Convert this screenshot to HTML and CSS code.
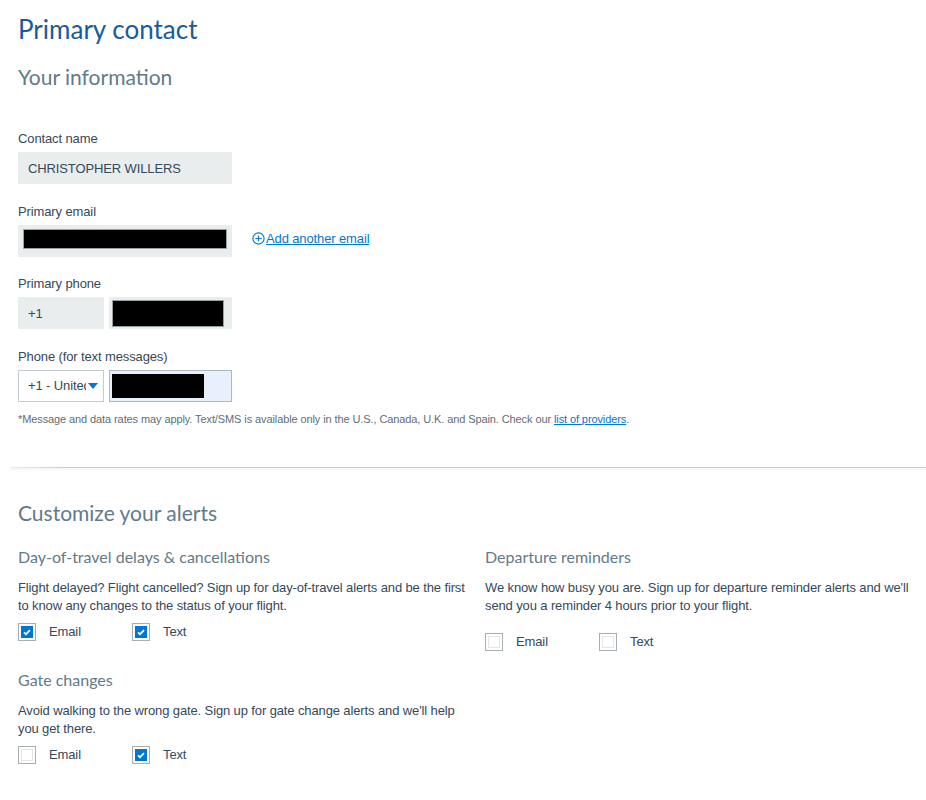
FILE: index.html
```html
<!DOCTYPE html>
<html lang="en">
<head>
<meta charset="utf-8">
<title>Primary contact</title>
<link rel="stylesheet" href="styles.css">
</head>
<body>
<main class="page">
  <h1 class="title">Primary contact</h1>
  <h2 class="section-title info-title">Your information</h2>

  <div class="fields">
    <div class="field">
      <div class="label">Contact name</div>
      <div class="input readonly wide">CHRISTOPHER WILLERS</div>
    </div>

    <div class="field">
      <div class="label">Primary email</div>
      <div class="row">
        <div class="input readonly wide email-box"><span class="redact redact-email"></span></div>
        <a class="add-link" href="#">
          <svg class="add-icon" width="13" height="13" viewBox="0 0 13 13" aria-hidden="true">
            <circle cx="6.5" cy="6.5" r="5.6" fill="none" stroke="#0078d2" stroke-width="1.1"/>
            <path d="M6.5 3.4v6.2M3.4 6.5h6.2" stroke="#0078d2" stroke-width="1.1" fill="none"/>
          </svg><span class="add-text">Add another email</span>
        </a>
      </div>
    </div>

    <div class="field">
      <div class="label">Primary phone</div>
      <div class="row phone-row">
        <div class="input readonly code">+1</div>
        <div class="input readonly number"><span class="redact redact-phone"></span></div>
      </div>
    </div>

    <div class="field last">
      <div class="label">Phone (for text messages)</div>
      <div class="row phone-row">
        <div class="select">
          <span class="select-text">+1 - United States</span>
          <svg class="caret" width="10" height="6" viewBox="0 0 10 6" aria-hidden="true"><path d="M0 0h10L5 6z" fill="#0078d2"/></svg>
        </div>
        <div class="input autofill number"><span class="redact redact-sms"></span></div>
      </div>
    </div>
  </div>

  <p class="disclaimer">*Message and data rates may apply. Text/SMS is available only in the U.S., Canada, U.K. and Spain. Check our <a href="#">list of providers</a>.</p>

  <div class="divider"></div>

  <h2 class="section-title alerts-title">Customize your alerts</h2>

  <div class="alerts">
    <div class="alert-col">
      <section class="alert">
        <h3 class="alert-title">Day-of-travel delays &amp; cancellations</h3>
        <p class="alert-text">Flight delayed? Flight cancelled? Sign up for day-of-travel alerts and be the first to know any changes to the status of your flight.</p>
        <div class="options">
          <label class="option"><span class="box checked"><svg width="12" height="12" viewBox="0 0 12 12"><path d="M3 6.3l2 1.9 4-4" stroke="#fff" stroke-width="1.7" fill="none"/></svg></span><span>Email</span></label>
          <label class="option"><span class="box checked"><svg width="12" height="12" viewBox="0 0 12 12"><path d="M3 6.3l2 1.9 4-4" stroke="#fff" stroke-width="1.7" fill="none"/></svg></span><span>Text</span></label>
        </div>
      </section>
      <section class="alert gate">
        <h3 class="alert-title">Gate changes</h3>
        <p class="alert-text">Avoid walking to the wrong gate. Sign up for gate change alerts and we'll help you get there.</p>
        <div class="options">
          <label class="option"><span class="box"></span><span>Email</span></label>
          <label class="option"><span class="box checked"><svg width="12" height="12" viewBox="0 0 12 12"><path d="M3 6.3l2 1.9 4-4" stroke="#fff" stroke-width="1.7" fill="none"/></svg></span><span>Text</span></label>
        </div>
      </section>
    </div>
    <div class="alert-col">
      <section class="alert">
        <h3 class="alert-title">Departure reminders</h3>
        <p class="alert-text">We know how busy you are. Sign up for departure reminder alerts and we'll send you a reminder 4 hours prior to your flight.</p>
        <div class="options spaced">
          <label class="option"><span class="box"></span><span>Email</span></label>
          <label class="option"><span class="box"></span><span>Text</span></label>
        </div>
      </section>
    </div>
  </div>
</main>
</body>
</html>
```

FILE: styles.css
```css
html, body {
  margin: 0;
  padding: 0;
  background: #fff;
}

body {
  font-family: "Liberation Sans", Arial, sans-serif;
  font-size: 13px;
  letter-spacing: -0.12px;
  color: #36495a;
}

.page {
  padding: 13px 10px 20px 18px;
}

.title {
  margin: 0;
  font-family: Lato, "Open Sans", sans-serif;
  font-weight: 400;
  font-size: 26px;
  line-height: 32px;
  letter-spacing: 0;
  color: #1a5a9c;
}

.section-title {
  margin: 0;
  font-family: Lato, "Open Sans", sans-serif;
  font-weight: 400;
  font-size: 21px;
  line-height: 26px;
  letter-spacing: 0;
  color: #627a88;
}

.info-title {
  margin-top: 19px;
}

.fields {
  margin-top: 41px;
}

.field {
  margin-bottom: 19.5px;
}

.field.last {
  margin-bottom: 0;
}

.label {
  font-size: 13px;
  line-height: 16px;
  margin-bottom: 5px;
  color: #36495a;
}

.row {
  display: flex;
  align-items: center;
}

.phone-row {
  gap: 5px;
}

.input {
  box-sizing: border-box;
  height: 32px;
  display: flex;
  align-items: center;
  font-size: 13px;
  color: #36495a;
}

.readonly {
  background: #e9edee;
}

.wide {
  width: 214px;
  padding-left: 10px;
}

.email-box {
  padding-left: 5px;
  align-items: flex-start;
  padding-top: 4px;
}

.code {
  width: 86px;
  padding-left: 10px;
}

.number {
  width: 123px;
  padding-left: 3px;
}

.autofill {
  background: #e8f0fe;
  border: 1px solid #aeb7bd;
  padding-left: 2px;
}

.redact {
  display: block;
  background: #000;
  box-sizing: border-box;
  border: 1px solid #9aa0a4;
}

.redact-email {
  width: 204px;
  height: 20px;
}

.redact-phone {
  width: 112px;
  height: 27px;
  margin-top: 1px;
}

.redact-sms {
  width: 92px;
  height: 24px;
  border: none;
}

.add-link {
  margin-left: 20px;
  margin-bottom: 4px;
  display: flex;
  align-items: center;
  color: #0078d2;
  text-decoration: none;
  font-size: 13px;
}

.add-icon {
  display: block;
  margin-right: 1px;
}

.add-text {
  text-decoration: underline;
}

.select {
  box-sizing: border-box;
  width: 86px;
  height: 32px;
  border: 1px solid #c5ccd0;
  background: #fff;
  display: flex;
  align-items: center;
  padding: 0 5px 0 9px;
}

.select-text {
  flex: 1;
  white-space: nowrap;
  overflow: hidden;
  color: #36495a;
}

.caret {
  display: block;
  margin-left: 2px;
}

.disclaimer {
  margin: 10px 0 0;
  font-size: 11px;
  line-height: 14px;
  letter-spacing: -0.1px;
  color: #5f6d78;
}

.disclaimer a {
  color: #0078d2;
}

.divider {
  margin: 41px -10px 0 -8px;
  height: 1px;
  background: linear-gradient(to right, #eceeef, #cbced0 6%, #cbced0);
  box-shadow: 0 1px 3px rgba(0, 0, 0, 0.14);
}

.alerts-title {
  margin-top: 32px;
}

.alerts {
  display: grid;
  grid-template-columns: 455px 1fr;
  column-gap: 12px;
  margin-top: 21px;
}

.alert-title {
  margin: 0;
  font-family: Lato, "Open Sans", sans-serif;
  font-weight: 400;
  font-size: 16px;
  line-height: 20px;
  letter-spacing: 0;
  color: #627a88;
}

.alert-text {
  margin: 12px 0 0;
  font-size: 13px;
  line-height: 18px;
  color: #36495a;
}

.gate {
  margin-top: 29px;
}

.options {
  display: flex;
  margin-top: 8px;
}

.options.spaced {
  margin-top: 18px;
}

.option {
  display: flex;
  align-items: center;
  width: 114px;
  line-height: 18px;
}

.box {
  box-sizing: border-box;
  width: 18px;
  height: 18px;
  border: 1px solid #a7aeb3;
  padding: 2px;
  margin-right: 13px;
  display: flex;
  background: #fff;
}

.box::after {
  content: "";
  flex: 1;
  border: 1px solid #e3e6e8;
}

.box.checked::after {
  display: none;
}

.box svg {
  display: block;
  background: #0078d2;
  width: 12px;
  height: 12px;
}
```
